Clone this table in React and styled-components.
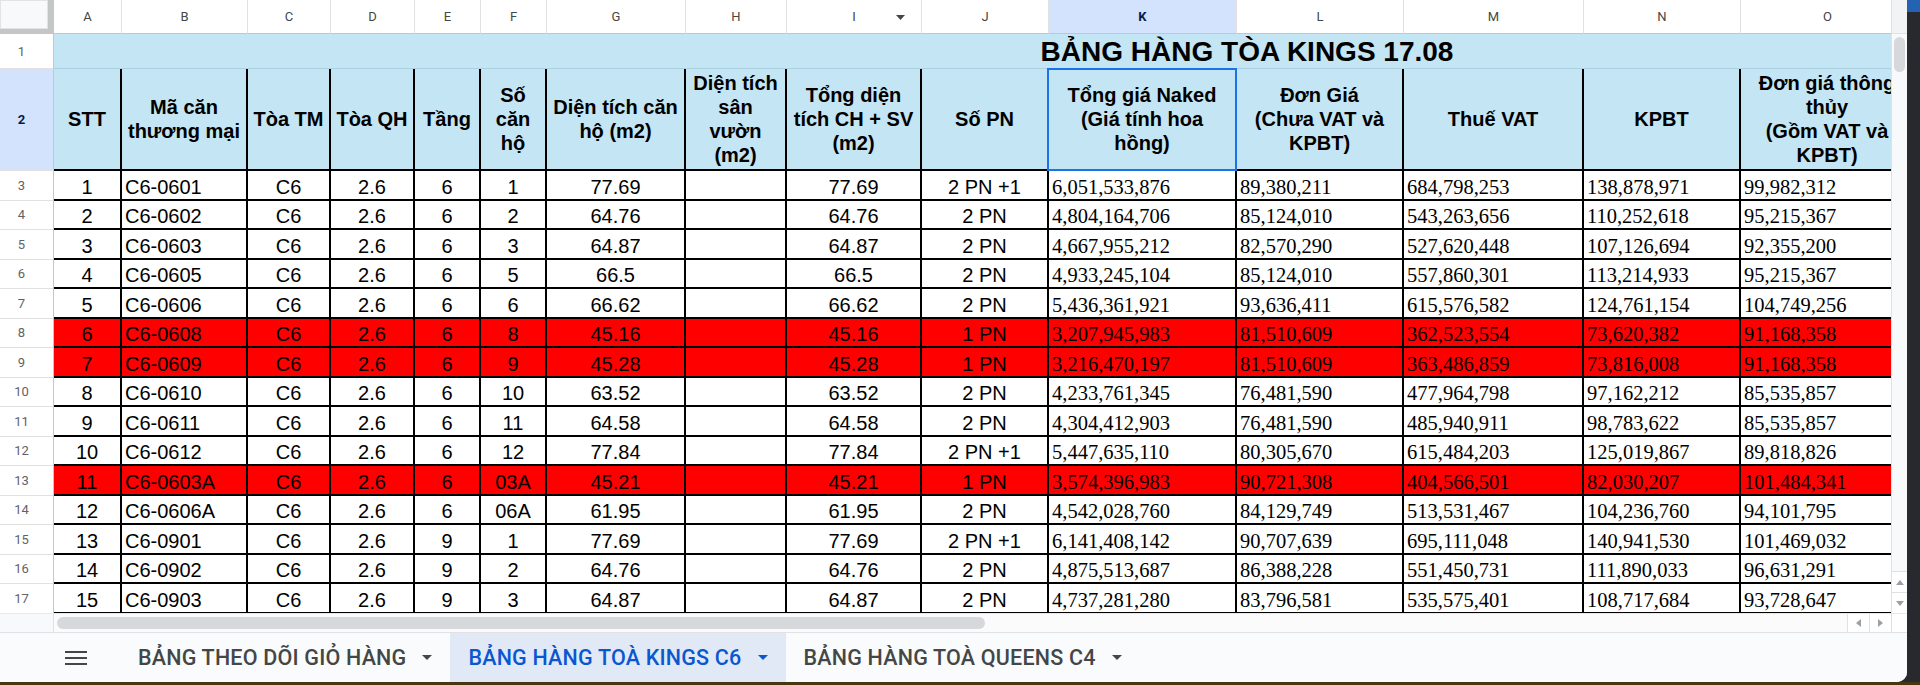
import React from 'react'
import styled, { createGlobalStyle } from 'styled-components'

const COLS = [
  { id: 'A', w: 68 },
  { id: 'B', w: 126, left: true },
  { id: 'C', w: 83 },
  { id: 'D', w: 84 },
  { id: 'E', w: 66 },
  { id: 'F', w: 66 },
  { id: 'G', w: 139 },
  { id: 'H', w: 101 },
  { id: 'I', w: 135, filter: true },
  { id: 'J', w: 127 },
  { id: 'K', w: 188, left: true, serif: true, active: true },
  { id: 'L', w: 167, left: true, serif: true },
  { id: 'M', w: 180, left: true, serif: true },
  { id: 'N', w: 157, left: true, serif: true },
  { id: 'O', w: 174, left: true, serif: true },
]
const TEMPLATE = `54px ${COLS.map((c) => c.w + 'px').join(' ')}`

const HEADERS = [
  ['STT'],
  ['Mã căn', 'thương mại'],
  ['Tòa TM'],
  ['Tòa QH'],
  ['Tầng'],
  ['Số', 'căn', 'hộ'],
  ['Diện tích căn', 'hộ (m2)'],
  ['Diện tích', 'sân', 'vườn', '(m2)'],
  ['Tổng diện', 'tích CH + SV', '(m2)'],
  ['Số PN'],
  ['Tổng giá Naked', '(Giá tính hoa', 'hồng)'],
  ['Đơn Giá', '(Chưa VAT và', 'KPBT)'],
  ['Thuế VAT'],
  ['KPBT'],
  ['Đơn giá thông', 'thủy', '(Gồm VAT và', 'KPBT)'],
]

// stt, mã, TM, QH, tầng, số căn, dt, sân vườn, tổng dt, PN, naked, đơn giá, VAT, KPBT, thông thủy, red
const ROWS = [
  ['1', 'C6-0601', 'C6', '2.6', '6', '1', '77.69', '', '77.69', '2 PN +1', '6,051,533,876', '89,380,211', '684,798,253', '138,878,971', '99,982,312'],
  ['2', 'C6-0602', 'C6', '2.6', '6', '2', '64.76', '', '64.76', '2 PN', '4,804,164,706', '85,124,010', '543,263,656', '110,252,618', '95,215,367'],
  ['3', 'C6-0603', 'C6', '2.6', '6', '3', '64.87', '', '64.87', '2 PN', '4,667,955,212', '82,570,290', '527,620,448', '107,126,694', '92,355,200'],
  ['4', 'C6-0605', 'C6', '2.6', '6', '5', '66.5', '', '66.5', '2 PN', '4,933,245,104', '85,124,010', '557,860,301', '113,214,933', '95,215,367'],
  ['5', 'C6-0606', 'C6', '2.6', '6', '6', '66.62', '', '66.62', '2 PN', '5,436,361,921', '93,636,411', '615,576,582', '124,761,154', '104,749,256'],
  ['6', 'C6-0608', 'C6', '2.6', '6', '8', '45.16', '', '45.16', '1 PN', '3,207,945,983', '81,510,609', '362,523,554', '73,620,382', '91,168,358', true],
  ['7', 'C6-0609', 'C6', '2.6', '6', '9', '45.28', '', '45.28', '1 PN', '3,216,470,197', '81,510,609', '363,486,859', '73,816,008', '91,168,358', true],
  ['8', 'C6-0610', 'C6', '2.6', '6', '10', '63.52', '', '63.52', '2 PN', '4,233,761,345', '76,481,590', '477,964,798', '97,162,212', '85,535,857'],
  ['9', 'C6-0611', 'C6', '2.6', '6', '11', '64.58', '', '64.58', '2 PN', '4,304,412,903', '76,481,590', '485,940,911', '98,783,622', '85,535,857'],
  ['10', 'C6-0612', 'C6', '2.6', '6', '12', '77.84', '', '77.84', '2 PN +1', '5,447,635,110', '80,305,670', '615,484,203', '125,019,867', '89,818,826'],
  ['11', 'C6-0603A', 'C6', '2.6', '6', '03A', '45.21', '', '45.21', '1 PN', '3,574,396,983', '90,721,308', '404,566,501', '82,030,207', '101,484,341', true],
  ['12', 'C6-0606A', 'C6', '2.6', '6', '06A', '61.95', '', '61.95', '2 PN', '4,542,028,760', '84,129,749', '513,531,467', '104,236,760', '94,101,795'],
  ['13', 'C6-0901', 'C6', '2.6', '9', '1', '77.69', '', '77.69', '2 PN +1', '6,141,408,142', '90,707,639', '695,111,048', '140,941,530', '101,469,032'],
  ['14', 'C6-0902', 'C6', '2.6', '9', '2', '64.76', '', '64.76', '2 PN', '4,875,513,687', '86,388,228', '551,450,731', '111,890,033', '96,631,291'],
  ['15', 'C6-0903', 'C6', '2.6', '9', '3', '64.87', '', '64.87', '2 PN', '4,737,281,280', '83,796,581', '535,575,401', '108,717,684', '93,728,647'],
]

const TABS = [
  { name: 'BẢNG THEO DÕI GIỎ HÀNG' },
  { name: 'BẢNG HÀNG TOÀ KINGS C6', active: true },
  { name: 'BẢNG HÀNG TOÀ QUEENS C4' },
]

const GlobalStyle = createGlobalStyle`
  html, body {
    margin: 0;
    padding: 0;
  }
  body {
    width: 1920px;
    height: 685px;
    overflow: hidden;
    background: linear-gradient(to bottom, #2463b4 0 12px, #27292e 12px 682px, #4a3512 682px);
    font-family: 'Liberation Sans', Arial, sans-serif;
  }
`

const Desktop = styled.div`
  display: flex;
  width: 1920px;
  height: 685px;
`

const Window = styled.div`
  width: 1907px;
  height: 682px;
  display: flex;
  flex-direction: column;
  background: #fff;
  border-bottom-right-radius: 10px;
  overflow: hidden;
`

const SheetArea = styled.div`
  display: flex;
  height: 613px;
`

const Viewport = styled.div`
  width: 1891px;
  overflow: hidden;
`

const Row = styled.div`
  display: grid;
  grid-template-columns: ${TEMPLATE};
  width: 1915px;
  height: ${(p) => p.$h}px;
`

const TitleRow = styled.div`
  display: flex;
  height: 35px;
`

const Corner = styled.div`
  box-sizing: border-box;
  background: #f8f9fa;
  border-right: 6px solid #c4c7c5;
  border-bottom: 5px solid #c4c7c5;
  box-shadow: inset 0 0 0 1px #e3e3e3;
`

const ColHead = styled.div`
  position: relative;
  box-sizing: border-box;
  display: flex;
  align-items: center;
  justify-content: center;
  border-right: 1px solid #e1e1e1;
  border-bottom: 1px solid #c4c7c5;
  background: ${(p) => (p.$active ? '#d3e3fd' : '#fff')};
  color: ${(p) => (p.$active ? '#041e49' : '#444746')};
  font-family: Roboto, 'Liberation Sans', sans-serif;
  font-size: 13px;
  font-weight: ${(p) => (p.$active ? 700 : 400)};
`

const FilterCaret = styled.svg`
  position: absolute;
  right: 16px;
  top: 15px;
`

const RowHead = styled.div`
  box-sizing: border-box;
  flex: none;
  width: 54px;
  display: flex;
  align-items: center;
  justify-content: center;
  padding-right: 10px;
  border-right: 1px solid #c4c7c5;
  border-bottom: 1px solid #e1e1e1;
  background: ${(p) => (p.$active ? '#d3e3fd' : '#fff')};
  color: ${(p) => (p.$active ? '#041e49' : '#5f6368')};
  font-family: Roboto, 'Liberation Sans', sans-serif;
  font-size: 13px;
  font-weight: ${(p) => (p.$active ? 700 : 400)};
`

const TitleCell = styled.div`
  box-sizing: border-box;
  flex: none;
  width: 2386px;
  display: flex;
  align-items: flex-end;
  justify-content: center;
  background: #c4e5f3;
  border-bottom: 1px solid #abd0e2;
  font-size: 28px;
  font-weight: 700;
  color: #000;
  line-height: 32px;
`

const HeadCell = styled.div`
  position: relative;
  box-sizing: border-box;
  display: flex;
  flex-direction: column;
  align-items: center;
  justify-content: center;
  padding: 0 3px;
  background: #c4e5f3;
  border-right: 2px solid #000;
  border-bottom: 2px solid #000;
  font-size: 20px;
  font-weight: 700;
  line-height: 24px;
  color: #000;
  text-align: center;
  white-space: nowrap;

  ${(p) =>
    p.$selected &&
    `
    &::after {
      content: '';
      position: absolute;
      left: -2px;
      top: -1px;
      right: -2px;
      bottom: -2px;
      border: 2px solid #1a73e8;
    }
  `}
`

const Cell = styled.div`
  box-sizing: border-box;
  display: flex;
  align-items: flex-end;
  justify-content: ${(p) => (p.$left ? 'flex-start' : 'center')};
  padding: 0 ${(p) => (p.$left ? '3px' : '2px')};
  background: ${(p) => (p.$red ? '#ff0000' : '#fff')};
  border-right: 2px solid #000;
  border-bottom: 2px solid #000;
  font-family: ${(p) =>
    p.$serif
      ? "'Liberation Serif', 'Times New Roman', serif"
      : "'Liberation Sans', Arial, sans-serif"};
  font-size: ${(p) => (p.$serif ? '20.5px' : '20px')};
  line-height: 24px;
  color: #000;
  white-space: nowrap;
  overflow: hidden;
`

const VScroll = styled.div`
  box-sizing: border-box;
  width: 16px;
  display: flex;
  flex-direction: column;
  background: #f8f9fa;
  border-left: 1px solid #e1e1e1;
`

const VScrollTop = styled.div`
  height: 34px;
  background: #f1f3f4;
  border-bottom: 1px solid #e1e1e1;
  box-sizing: border-box;
`

const Track = styled.div`
  flex: 1;
  display: flex;
  flex-direction: ${(p) => (p.$horizontal ? 'row' : 'column')};
  align-items: flex-start;
  padding: ${(p) => (p.$horizontal ? '3px 0 0 3px' : '3px 0 0 2px')};
  box-sizing: border-box;
  background: ${(p) => (p.$horizontal ? '#fbfbfb' : 'transparent')};
`

const Thumb = styled.div`
  flex: none;
  background: #d6d8dc;
  border-radius: 6px;
  width: ${(p) => (p.$horizontal ? '928px' : '11px')};
  height: ${(p) => (p.$horizontal ? '12px' : '35px')};
`

const ArrowButton = styled.div`
  box-sizing: border-box;
  display: flex;
  align-items: center;
  justify-content: center;
  color: #9aa0a6;
  background: #fff;
  ${(p) =>
    p.$horizontal
      ? 'width: 22px; height: 100%; border-left: 1px solid #e1e1e1;'
      : 'height: 21px; border-top: 1px solid #e1e1e1;'}
`

const HScroll = styled.div`
  display: flex;
  height: 19px;
  background: #fff;
  border-top: 1px solid #e8e8e8;
  box-sizing: border-box;
`

const HScrollHead = styled.div`
  box-sizing: border-box;
  width: 54px;
  background: #f8f9fa;
  border-right: 1px solid #e1e1e1;
`

const HScrollCorner = styled.div`
  box-sizing: border-box;
  width: 16px;
  border-left: 1px solid #e1e1e1;
  background: #fff;
`

const TabBar = styled.div`
  flex: 1;
  display: flex;
  align-items: stretch;
  background: #f9fbfd;
  border-top: 1px solid #e0e2e6;
`

const MenuButton = styled.div`
  display: flex;
  align-items: center;
  justify-content: center;
  width: 44px;
  margin: 0 22px 0 54px;
  color: #444746;
`

const Tab = styled.div`
  display: flex;
  align-items: center;
  padding: 0 18px;
  background: ${(p) => (p.$active ? '#e1e9f7' : 'transparent')};
  color: ${(p) => (p.$active ? '#0b57d0' : '#444746')};
  font-family: Roboto, 'Liberation Sans', sans-serif;
  font-size: 21.5px;
  letter-spacing: 0.2px;
  font-weight: 500;
  white-space: nowrap;
`

const TabCaret = styled.svg`
  margin-left: 16px;
  flex: none;
`

const Caret = ({ color = '#444746' }) => (
  <TabCaret width='10' height='5' viewBox='0 0 10 5'>
    <path d='M0 0 L10 0 L5 5 Z' fill={color} />
  </TabCaret>
)

const Tri = ({ dir }) => {
  const d = {
    up: 'M0 5 L8 5 L4 0 Z',
    down: 'M0 0 L8 0 L4 5 Z',
    left: 'M5 0 L5 8 L0 4 Z',
    right: 'M0 0 L0 8 L5 4 Z',
  }[dir]
  const horiz = dir === 'left' || dir === 'right'
  return (
    <svg width={horiz ? 5 : 8} height={horiz ? 8 : 5} viewBox={horiz ? '0 0 5 8' : '0 0 8 5'}>
      <path d={d} fill='#9aa0a6' />
    </svg>
  )
}

const App = () => {
  return (
    <>
      <GlobalStyle />
      <Desktop>
        <Window>
          <SheetArea>
            <Viewport>
              <Row $h={34}>
                <Corner />
                {COLS.map((c) => (
                  <ColHead key={c.id} $active={c.active}>
                    {c.id}
                    {c.filter && (
                      <FilterCaret width='9' height='5' viewBox='0 0 9 5'>
                        <path d='M0 0 L9 0 L4.5 5 Z' fill='#444746' />
                      </FilterCaret>
                    )}
                  </ColHead>
                ))}
              </Row>

              <TitleRow>
                <RowHead>1</RowHead>
                <TitleCell>BẢNG HÀNG TÒA KINGS 17.08</TitleCell>
              </TitleRow>

              <Row $h={102}>
                <RowHead $active>2</RowHead>
                {HEADERS.map((lines, i) => (
                  <HeadCell key={i} $selected={COLS[i].active}>
                    {lines.map((l) => (
                      <span key={l}>{l}</span>
                    ))}
                  </HeadCell>
                ))}
              </Row>

              {ROWS.map((r, ri) => (
                <Row $h={29.5} key={ri}>
                  <RowHead>{ri + 3}</RowHead>
                  {COLS.map((c, ci) => (
                    <Cell key={c.id} $left={c.left} $serif={c.serif} $red={r[15]}>
                      {r[ci]}
                    </Cell>
                  ))}
                </Row>
              ))}
            </Viewport>

            <VScroll>
              <VScrollTop />
              <Track>
                <Thumb />
              </Track>
              <ArrowButton>
                <Tri dir='up' />
              </ArrowButton>
              <ArrowButton>
                <Tri dir='down' />
              </ArrowButton>
            </VScroll>
          </SheetArea>

          <HScroll>
            <HScrollHead />
            <Track $horizontal>
              <Thumb $horizontal />
            </Track>
            <ArrowButton $horizontal>
              <Tri dir='left' />
            </ArrowButton>
            <ArrowButton $horizontal>
              <Tri dir='right' />
            </ArrowButton>
            <HScrollCorner />
          </HScroll>

          <TabBar>
            <MenuButton>
              <svg width='22' height='14' viewBox='0 0 22 14'>
                <rect x='0' y='0' width='22' height='2' fill='#444746' />
                <rect x='0' y='6' width='22' height='2' fill='#444746' />
                <rect x='0' y='12' width='22' height='2' fill='#444746' />
              </svg>
            </MenuButton>
            {TABS.map((t) => (
              <Tab key={t.name} $active={t.active}>
                {t.name}
                <Caret color={t.active ? '#0b57d0' : '#444746'} />
              </Tab>
            ))}
          </TabBar>
        </Window>
      </Desktop>
    </>
  )
}

export default App
